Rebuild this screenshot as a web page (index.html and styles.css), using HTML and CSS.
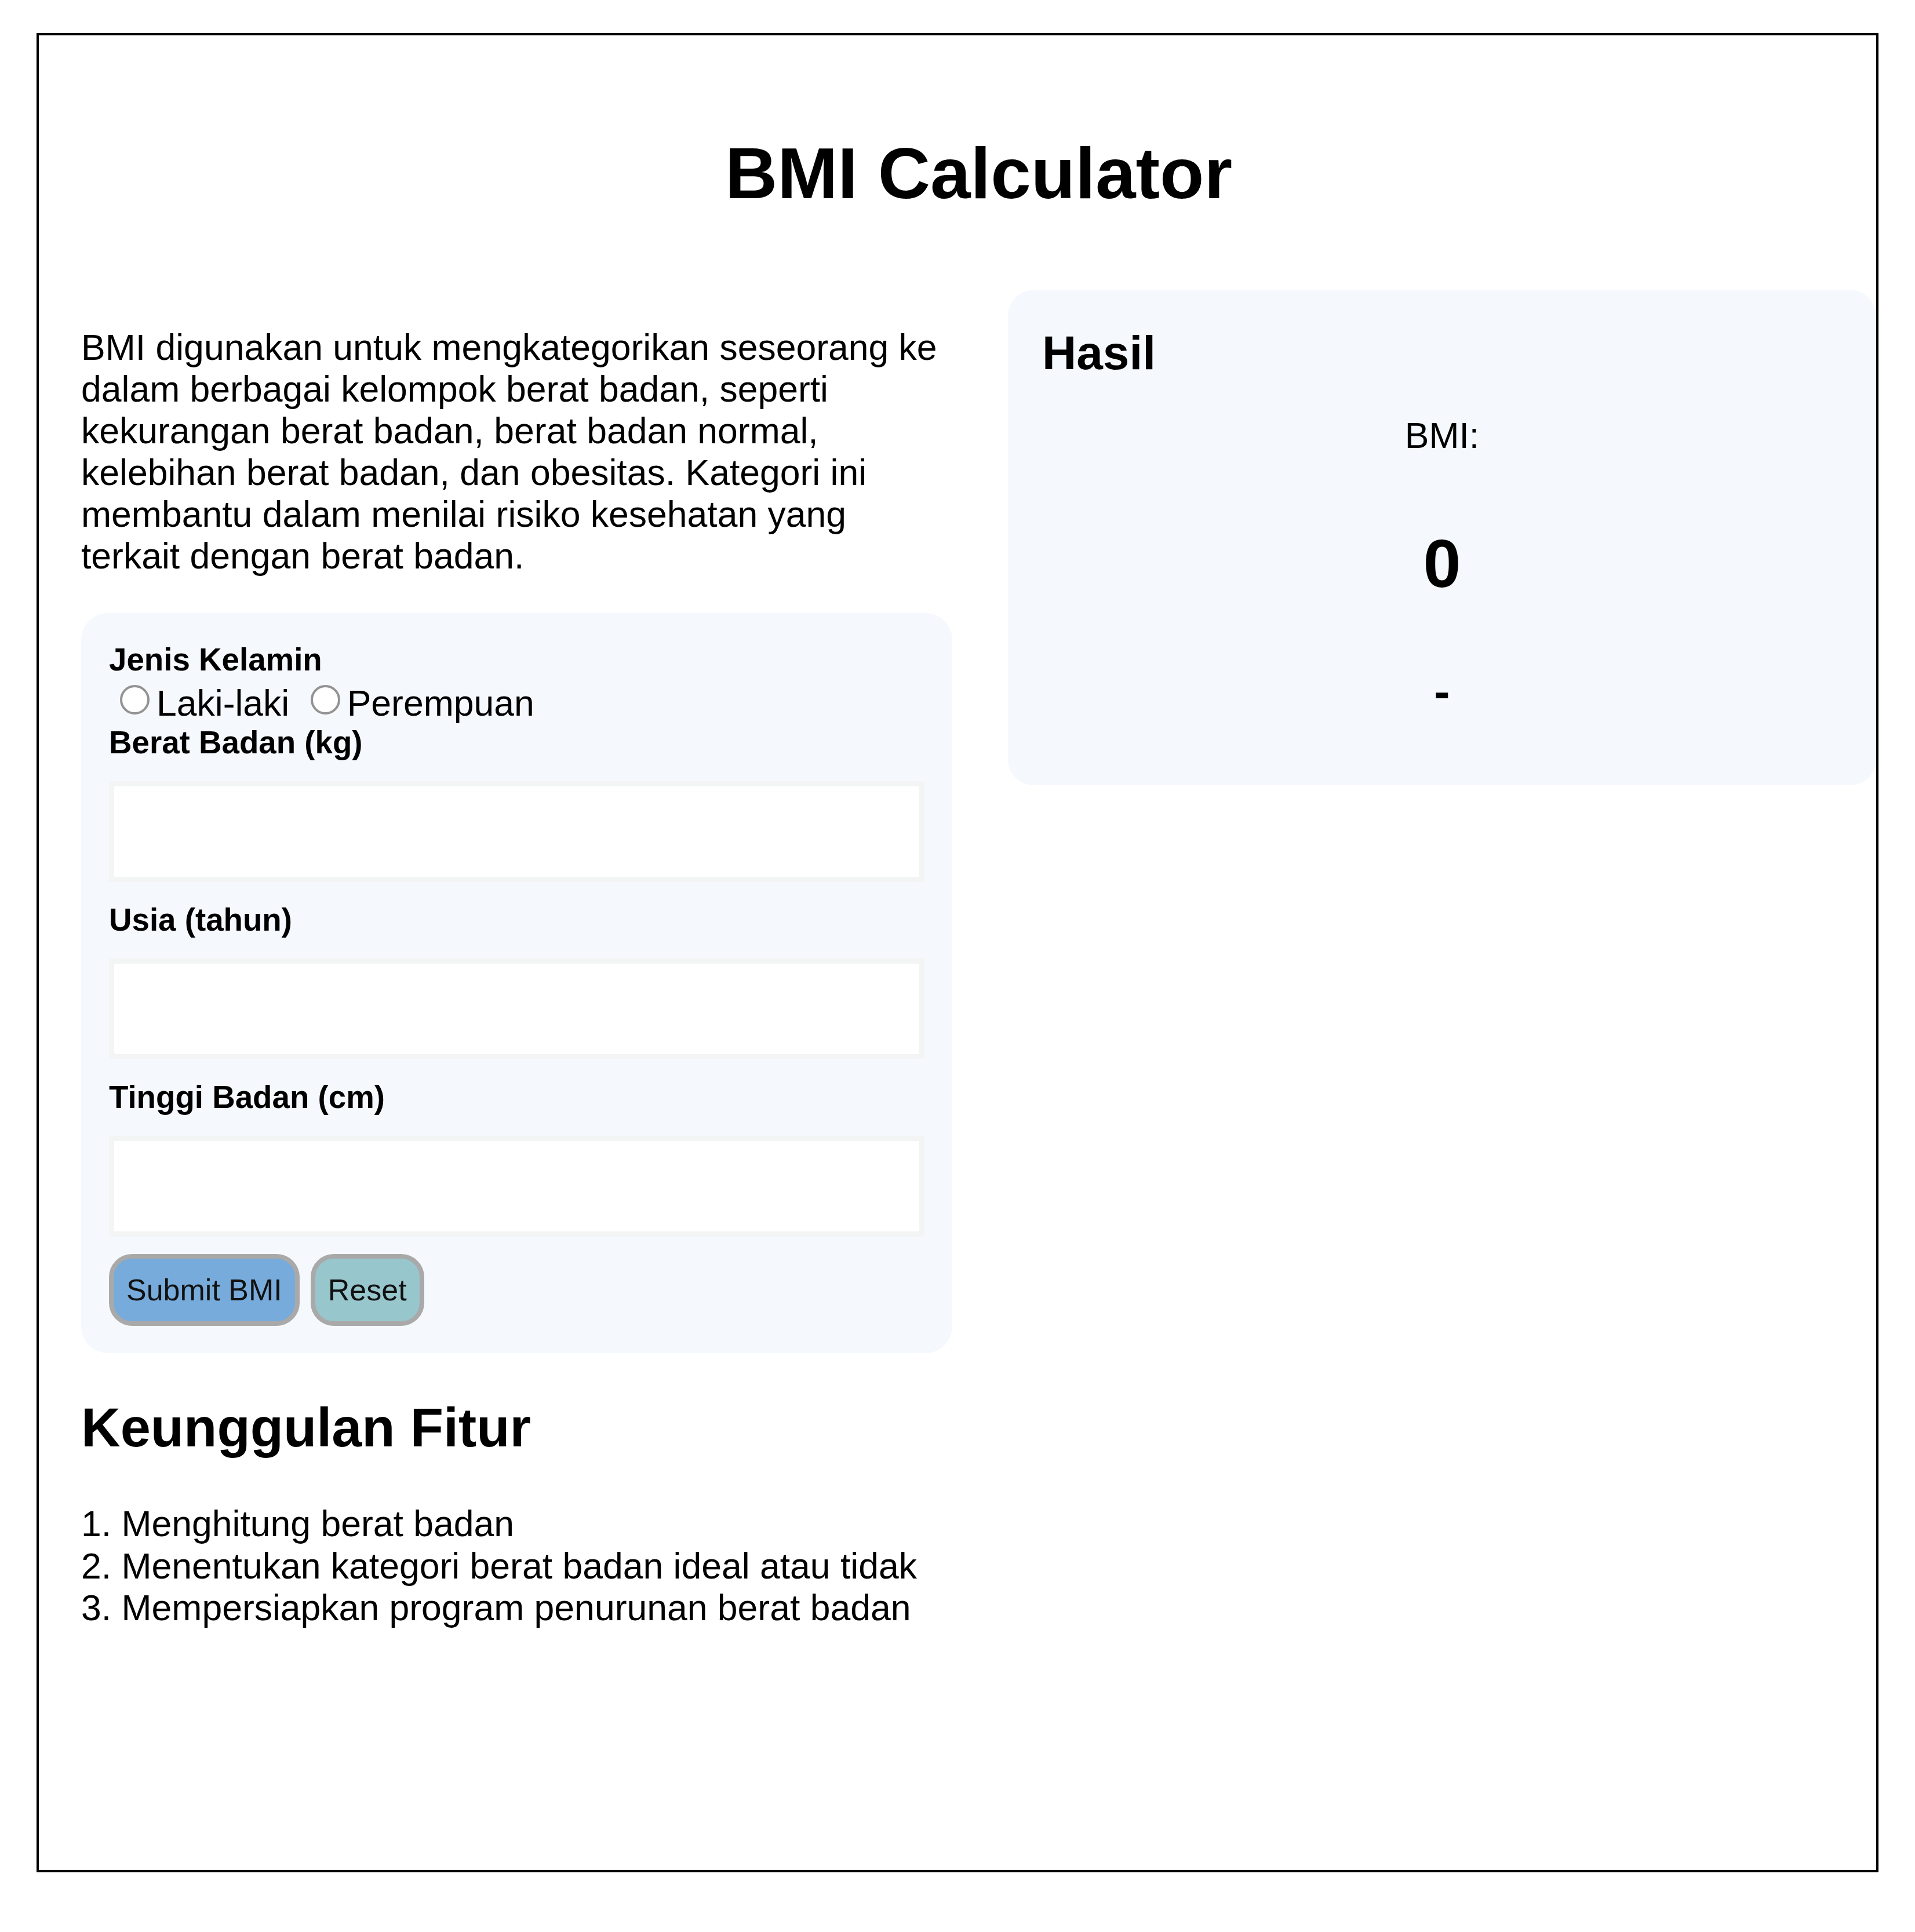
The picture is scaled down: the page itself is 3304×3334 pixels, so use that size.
FILE: index.html
```html
<!DOCTYPE html>
<html lang="id">
<head>
<meta charset="utf-8">
<title>BMI Calculator</title>
<link rel="stylesheet" href="styles.css">
</head>
<body>
<div class="frame">
  <h1 class="title">BMI Calculator</h1>
  <div class="columns">
    <div class="left">
      <p class="intro">BMI digunakan untuk mengkategorikan seseorang ke dalam berbagai kelompok berat badan, seperti kekurangan berat badan, berat badan normal, kelebihan berat badan, dan obesitas. Kategori ini membantu dalam menilai risiko kesehatan yang terkait dengan berat badan.</p>
      <form class="form-card">
        <label class="field-label">Jenis Kelamin</label>
        <div class="radios"><label class="radio-opt"><input class="radio" type="radio" name="jk" value="L">Laki-laki</label> <label class="radio-opt"><input class="radio" type="radio" name="jk" value="P">Perempuan</label></div>
        <label class="field-label" for="berat">Berat Badan (kg)</label>
        <input class="text-input" id="berat" type="text">
        <label class="field-label" for="usia">Usia (tahun)</label>
        <input class="text-input" id="usia" type="text">
        <label class="field-label" for="tinggi">Tinggi Badan (cm)</label>
        <input class="text-input" id="tinggi" type="text">
        <div class="buttons">
          <button class="btn btn-submit" type="button">Submit BMI</button>
          <button class="btn btn-reset" type="reset">Reset</button>
        </div>
      </form>
      <h2 class="features-title">Keunggulan Fitur</h2>
      <ol class="features">
        <li>Menghitung berat badan</li>
        <li>Menentukan kategori berat badan ideal atau tidak</li>
        <li>Mempersiapkan program penurunan berat badan</li>
      </ol>
    </div>
    <div class="result-card">
      <h3 class="result-title">Hasil</h3>
      <p class="bmi-label">BMI:</p>
      <p class="bmi-value">0</p>
      <p class="bmi-cat">-</p>
    </div>
  </div>
</div>
</body>
</html>
```

FILE: styles.css
```css
html, body {
  margin: 0;
  padding: 0;
  background: #ffffff;
}

body {
  font-family: "Liberation Sans", Arial, sans-serif;
  font-size: 62.5px;
  color: #000000;
}

.frame {
  box-sizing: border-box;
  margin: 57px 0 0 63px;
  width: 3178px;
  height: 3174px;
  border: 4px solid #000000;
  padding: 166px 0 0 73px;
}

.title {
  margin: 0 0 131px;
  font-size: 125px;
  font-weight: bold;
  text-align: center;
  line-height: normal;
}

.columns {
  display: grid;
  grid-template-columns: 1503px 1498px;
  column-gap: 96px;
  align-items: start;
}

.intro {
  width: 1492px;
  margin: 62px 0 63px;
  font-size: 62.5px;
  line-height: 72px;
}

.form-card {
  background: #f5f9fd;
  border-radius: 46px;
  padding: 48px 48px 47px;
}

.field-label {
  display: block;
  font-size: 54.7px;
  font-weight: bold;
  line-height: normal;
}

.radios {
  font-size: 62.5px;
  line-height: normal;
}

.radio {
  appearance: none;
  -webkit-appearance: none;
  box-sizing: border-box;
  width: 51px;
  height: 51px;
  margin: 12px 12px 2px 19px;
  border: 4px solid #939393;
  border-radius: 50%;
  background: #ffffff;
  vertical-align: baseline;
}

.text-input {
  display: block;
  box-sizing: border-box;
  width: 100%;
  height: 174px;
  margin: 35px 0 33px;
  padding: 0;
  border: 9px solid #f3f4f4;
  background: #ffffff;
  font-size: 52px;
}

.buttons {
  display: flex;
  gap: 19px;
  margin-top: -3px;
}

.btn {
  font-family: "Liberation Sans", Arial, sans-serif;
  font-size: 52px;
  line-height: normal;
  color: #111111;
  padding: 24px 22px;
  border: 8px solid #a9a9a9;
  border-radius: 40px;
}

.btn-submit {
  background: #77abdb;
}

.btn-reset {
  background: #98c6cd;
}

.features-title {
  margin: 75px 0 75px;
  font-size: 93.75px;
  font-weight: bold;
  line-height: normal;
}

.features {
  margin: 0;
  padding: 0;
  list-style-position: inside;
  font-size: 62.5px;
  line-height: 72.5px;
}

.result-card {
  background: #f5f9fd;
  border-radius: 44px;
  padding: 61px 59px 59px;
}

.result-title {
  margin: 0 0 59px;
  font-size: 82px;
  font-weight: bold;
  line-height: normal;
}

.bmi-label {
  margin: 0 0 118px;
  text-align: center;
  font-size: 62.5px;
  line-height: normal;
}

.bmi-value {
  margin: 0 0 106px;
  text-align: center;
  font-size: 117px;
  font-weight: bold;
  line-height: normal;
}

.bmi-cat {
  margin: 0 0 56px;
  text-align: center;
  font-size: 82px;
  font-weight: bold;
  line-height: normal;
}
```
